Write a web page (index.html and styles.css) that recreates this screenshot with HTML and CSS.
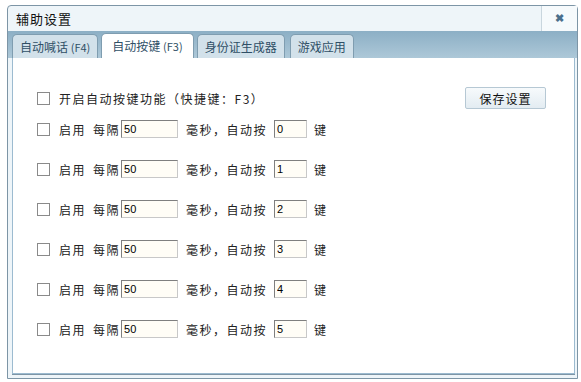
FILE: index.html
```html
<!DOCTYPE html>
<html lang="zh-CN">

<head>
    <meta charset="UTF-8">
    <title>辅助设置</title>
    <link rel="stylesheet" href="styles.css">
</head>

<body>
    <div class="window">
        <div class="title-bar">
            <span class="title">辅助设置</span>
            <button class="close-btn">&#10006;</button>
        </div>
        <div class="tab-strip">
            <div class="tab">自动喊话 <span class="key">(F4)</span></div>
            <div class="tab active">自动按键 <span class="key">(F3)</span></div>
            <div class="tab">身份证生成器</div>
            <div class="tab last">游戏应用</div>
        </div>
        <div class="panel">
            <div class="row first">
                <label class="check"><span class="box"></span>开启自动按键功能（快捷键：F3）</label>
                <button class="save-btn">保存设置</button>
            </div>
            <div class="row">
                <label class="check"><span class="box"></span>启用</label>
                <span class="lbl every">每隔</span><input class="ms" value="50">
                <span class="lbl">毫秒，自动按</span><input class="key-input" value="0">
                <span class="lbl unit">键</span>
            </div>
            <div class="row">
                <label class="check"><span class="box"></span>启用</label>
                <span class="lbl every">每隔</span><input class="ms" value="50">
                <span class="lbl">毫秒，自动按</span><input class="key-input" value="1">
                <span class="lbl unit">键</span>
            </div>
            <div class="row">
                <label class="check"><span class="box"></span>启用</label>
                <span class="lbl every">每隔</span><input class="ms" value="50">
                <span class="lbl">毫秒，自动按</span><input class="key-input" value="2">
                <span class="lbl unit">键</span>
            </div>
            <div class="row">
                <label class="check"><span class="box"></span>启用</label>
                <span class="lbl every">每隔</span><input class="ms" value="50">
                <span class="lbl">毫秒，自动按</span><input class="key-input" value="3">
                <span class="lbl unit">键</span>
            </div>
            <div class="row">
                <label class="check"><span class="box"></span>启用</label>
                <span class="lbl every">每隔</span><input class="ms" value="50">
                <span class="lbl">毫秒，自动按</span><input class="key-input" value="4">
                <span class="lbl unit">键</span>
            </div>
            <div class="row">
                <label class="check"><span class="box"></span>启用</label>
                <span class="lbl every">每隔</span><input class="ms" value="50">
                <span class="lbl">毫秒，自动按</span><input class="key-input" value="5">
                <span class="lbl unit">键</span>
            </div>
        </div>
    </div>
</body>

</html>
```

FILE: styles.css
```css
body {
    margin: 0;
    padding: 5px 0 0 7px;
    background-color: #fff;
    font-family: "Noto Sans CJK SC", "Noto Sans", sans-serif;
    font-size: 12px;
    color: #222;
}

.window {
    width: 569px;
    height: 372px;
    border: 1px solid #7d95a6;
    border-radius: 4px 4px 0 0;
    background-color: #eef5f9;
    display: flex;
    flex-direction: column;
}

.title-bar {
    height: 25px;
    display: flex;
    align-items: center;
    justify-content: space-between;
    padding-left: 8px;
}

.title {
    font-size: 13px;
    letter-spacing: 1px;
    color: #111;
}

.close-btn {
    width: 36px;
    height: 25px;
    border: none;
    border-left: 1px solid #c9d6de;
    background-color: #f6fafc;
    color: #4a6f8c;
    font-size: 11px;
    font-weight: bold;
    padding: 0;
    cursor: pointer;
}

.tab-strip {
    height: 27px;
    background: linear-gradient(#8cafc5, #adc8d8);
    display: flex;
    align-items: flex-end;
    gap: 3px;
    padding-left: 4px;
}

.tab {
    height: 24px;
    line-height: 23px;
    padding: 0 7px;
    background-color: #d2e1ea;
    border: 1px solid #7f9db0;
    border-bottom: none;
    border-radius: 5px 5px 0 0;
    color: #2f4f66;
    box-sizing: border-box;
}

.tab .key {
    font-size: 11px;
}

.tab.active {
    background-color: #fff;
    height: 25px;
    line-height: 24px;
    padding: 0 10px;
}

.tab.last {
    margin-left: 2px;
}

.panel {
    flex: 1;
    margin: 0 2px 4px 4px;
    background-color: #fff;
    border: 1px solid #9cbbd0;
    border-top: none;
    box-shadow: 0 1px 0 #7d95a6;
    padding: 29px 0 0 24px;
}

.row {
    height: 40px;
    display: flex;
    align-items: center;
    letter-spacing: 1.5px;
}

.row.first {
    height: 22px;
    justify-content: space-between;
    padding-right: 28px;
}

.check {
    display: flex;
    align-items: center;
}

.box {
    width: 11px;
    height: 11px;
    border: 1px solid #8a8a8a;
    background-color: #fff;
    margin-right: 9px;
}

.lbl {
    margin-left: 8px;
}

.lbl.every {
    margin-left: 7px;
}

.lbl.unit {
    margin-left: 7px;
}

input {
    font-family: "Liberation Sans", sans-serif;
    font-size: 11px;
    letter-spacing: 0;
    height: 18px;
    box-sizing: border-box;
    border: 1px solid #7f7f7f;
    border-right-color: #c8c8c8;
    border-bottom-color: #c8c8c8;
    background-color: #fffdf6;
    padding: 0 2px;
}

.ms {
    width: 57px;
    margin-left: 1px;
}

.key-input {
    width: 33px;
    margin-left: 7px;
}

.save-btn {
    width: 81px;
    height: 22px;
    font-family: "Noto Sans CJK SC", sans-serif;
    font-size: 12px;
    letter-spacing: 1px;
    color: #111;
    background: linear-gradient(#f7fafc, #e3ecf2);
    border: 1px solid #b6c8d4;
    border-radius: 2px;
    cursor: pointer;
}
```
